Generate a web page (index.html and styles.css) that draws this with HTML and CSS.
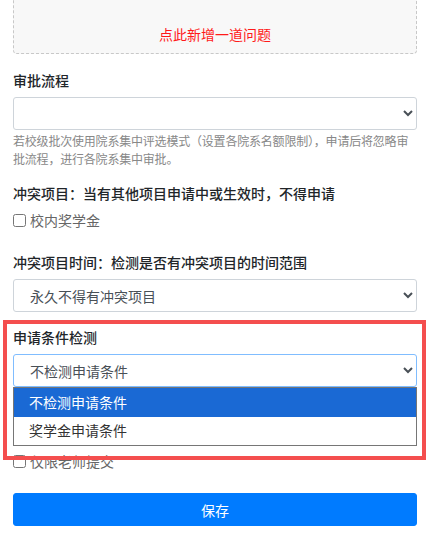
FILE: index.html
```html
<!DOCTYPE html>
<html lang="zh">
<head>
<meta charset="utf-8">
<link rel="stylesheet" href="styles.css">
</head>
<body>
<div class="page">
  <div class="add-box"><span class="add-text">点此新增一道问题</span></div>

  <div class="group first">
    <label class="label">审批流程</label>
    <select class="control"><option></option></select>
    <p class="help">若校级批次使用院系集中评选模式（设置各院系名额限制），申请后将忽略审批流程，进行各院系集中审批。</p>
  </div>

  <div class="group">
    <label class="label">冲突项目：当有其他项目申请中或生效时，不得申请</label>
    <label class="check"><input type="checkbox"><span>校内奖学金</span></label>
  </div>

  <div class="group wide">
    <label class="label">冲突项目时间：检测是否有冲突项目的时间范围</label>
    <select class="control"><option>永久不得有冲突项目</option></select>
  </div>

  <div class="group hl">
    <label class="label">申请条件检测</label>
    <div class="select-wrap">
      <select class="control focused"><option>不检测申请条件</option></select>
      <div class="menu">
        <div class="opt active">不检测申请条件</div>
        <div class="opt">奖学金申请条件</div>
      </div>
    </div>
    <div class="highlight"></div>
  </div>

  <label class="check teacher"><input type="checkbox"><span>仅限老师提交</span></label>

  <button class="save">保存</button>
</div>
</body>
</html>
```

FILE: styles.css
```css
* { box-sizing: border-box; }
html, body { margin: 0; padding: 0; background: #fff; }
body {
  font-family: "Noto Sans CJK SC", "Noto Sans", sans-serif;
  font-size: 14px;
  color: #212529;
  overflow: hidden;
  height: 535px;
}
.page {
  padding: 0 10px 0 13px;
}
.add-box {
  margin-top: -30px;
  height: 84px;
  border: 1px dashed #c8c8c8;
  border-radius: 4px;
  background: #f8f8f8;
  display: flex;
  align-items: flex-end;
  justify-content: center;
  padding-bottom: 9px;
}
.add-text {
  color: #ff1a1a;
  font-size: 14px;
  line-height: 20px;
}
.group { margin-top: 15px; position: relative; }
.group.first { margin-top: 16px; }
.group.wide { margin-top: 22px; }
.label {
  display: block;
  font-size: 14px;
  line-height: 20px;
  font-weight: 500;
  color: #212529;
  margin-bottom: 7px;
}
.control {
  display: block;
  width: 100%;
  height: 33px;
  padding: 0 8px 0 12px;
  font-family: "Noto Sans CJK SC", "Noto Sans", sans-serif;
  font-size: 14px;
  color: #495057;
  background-color: #fff;
  border: 1px solid #ced4da;
  border-radius: 3px;
  outline: none;
}
.control.focused { border-color: #80bdff; }
.help {
  margin: 2px 0 0;
  font-size: 12px;
  letter-spacing: -0.2px;
  line-height: 18px;
  color: #888;
}
.check {
  display: flex;
  align-items: center;
  height: 20px;
  font-size: 14px;
  color: #666;
}
.check input {
  width: 13px;
  height: 13px;
  margin: 0 4px 0 0;
}
.select-wrap { position: relative; }
.menu {
  position: absolute;
  left: 0;
  right: 0;
  top: 100%;
  background: #fff;
  border: 1px solid #767676;
  z-index: 2;
}
.opt {
  height: 29px;
  line-height: 29px;
  padding-left: 15px;
  font-size: 14px;
  color: #333;
}
.opt + .opt { height: 28px; line-height: 27px; }
.opt.active { background: #1a69d4; color: #fff; }
.highlight {
  position: absolute;
  top: -7px;
  left: -10px;
  right: -9px;
  height: 140px;
  border: 4px solid #f44e4e;
  z-index: 3;
  pointer-events: none;
}
.teacher { margin-top: 64px; }
.save {
  display: block;
  width: 100%;
  height: 33px;
  margin-top: 22px;
  background: #007bff;
  color: #fff;
  border: 1px solid #007bff;
  border-radius: 3px;
  font-family: "Noto Sans CJK SC", "Noto Sans", sans-serif;
  font-size: 14px;
}
```
